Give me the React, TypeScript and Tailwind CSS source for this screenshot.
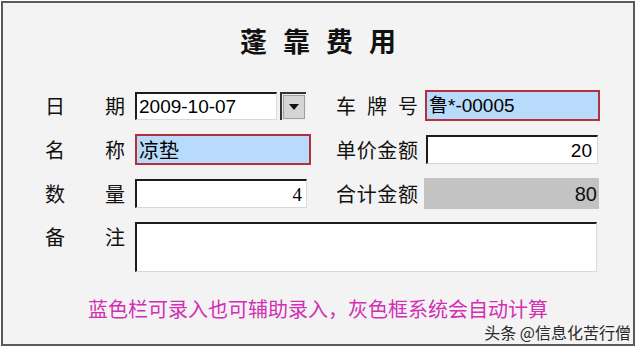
import React from 'react';

const cjk = "font-['Noto_Sans_CJK_SC','Noto_Sans',sans-serif]";

function Label({ chars }: { chars: string[] }) {
  return (
    <div className={`flex justify-between text-[20px] leading-none text-[#111] ${cjk}`}>
      {chars.map((c, i) => (
        <span key={i}>{c}</span>
      ))}
    </div>
  );
}

/* 下沉白框：左上深色，右下浅色 */
function Sunken({ className = '', children }: { className?: string; children?: React.ReactNode }) {
  return (
    <div
      className={`bg-white border-t-2 border-l-2 border-r border-b border-t-[#1c1c1c] border-l-[#1c1c1c] border-r-[#d8d8d8] border-b-[#d8d8d8] ${className}`}
    >
      {children}
    </div>
  );
}

function BlueBox({ className = '', children }: { className?: string; children?: React.ReactNode }) {
  return (
    <div className={`bg-[#b9dbfb] border-2 border-[#b3303c] flex items-center pl-[2px] ${className}`}>
      {children}
    </div>
  );
}

export default function App() {
  return (
    <div className="w-[640px] h-[348px] bg-white relative overflow-hidden">
      <div className="absolute left-[1px] top-[1px] w-[634px] h-[345px] border-2 border-[#5a5a5a] bg-[#f3f3f3]">
        {/* 标题 */}
        <div className={`pt-[22px] h-[56px] text-center text-[27px] font-bold leading-[32px] tracking-[16px] pl-[16px] text-[#111] ${cjk}`}>
          蓬靠费用
        </div>

        <div className="mt-[31px] pl-[42px] grid grid-cols-[80px_183px_110px_182px] gap-y-[13px]">
          {/* 第一行 */}
          <div className="h-[31px] flex items-center">
            <div className="w-[80px]"><Label chars={['日', '期']} /></div>
          </div>
          <div className="h-[31px] flex items-center pl-[10px] gap-[3px]">
            <Sunken className="w-[142px] h-[28px] shrink-0 flex items-center pl-[2px]">
              <span className="font-['Liberation_Sans',sans-serif] text-[19px] leading-none text-black">2009-10-07</span>
            </Sunken>
            <div className="w-[26px] h-[28px] shrink-0 border-t-2 border-l-2 border-t-[#333] border-l-[#333] bg-[#ececec] p-[1px] flex">
              <div className="flex-1 bg-[#d4d4d4] border border-[#a0a0a0] flex items-center justify-center">
                <svg width="10" height="6" viewBox="0 0 10 6">
                  <path d="M0 0 L10 0 L5 6 Z" fill="#111" />
                </svg>
              </div>
            </div>
          </div>
          <div className="h-[31px] flex items-center pl-[28px]">
            <div className="w-[82px]"><Label chars={['车', '牌', '号']} /></div>
          </div>
          <div className="h-[31px] flex items-center pl-[7px]">
            <BlueBox className="w-[175px] h-[31px] shrink-0">
              <span className="text-[19px] leading-none text-black font-['Liberation_Sans','Noto_Sans_CJK_SC',sans-serif]">鲁*-00005</span>
            </BlueBox>
          </div>

          {/* 第二行 */}
          <div className="h-[31px] flex items-center">
            <div className="w-[80px]"><Label chars={['名', '称']} /></div>
          </div>
          <div className="h-[31px] flex items-center pl-[10px]">
            <BlueBox className="w-[176px] h-[31px] shrink-0">
              <span className={`text-[20px] leading-none text-black ${cjk}`}>凉垫</span>
            </BlueBox>
          </div>
          <div className="h-[31px] flex items-center pl-[28px]">
            <div className="w-[82px]"><Label chars={['单', '价', '金', '额']} /></div>
          </div>
          <div className="h-[31px] flex items-center pl-[8px]">
            <Sunken className="w-[172px] h-[29px] shrink-0 flex items-center justify-end pr-[5px]">
              <span className="font-['Liberation_Sans',sans-serif] text-[19px] leading-none text-black">20</span>
            </Sunken>
          </div>

          {/* 第三行 */}
          <div className="h-[31px] flex items-center">
            <div className="w-[80px]"><Label chars={['数', '量']} /></div>
          </div>
          <div className="h-[31px] flex items-center pl-[10px]">
            <Sunken className="w-[172px] h-[29px] shrink-0 flex items-center justify-end pr-[4px]">
              <span className="font-['Liberation_Serif',serif] text-[19px] leading-none text-black">4</span>
            </Sunken>
          </div>
          <div className="h-[31px] flex items-center pl-[28px]">
            <div className="w-[82px]"><Label chars={['合', '计', '金', '额']} /></div>
          </div>
          <div className="h-[31px] flex items-center pl-[6px]">
            <div className="w-[175px] h-[31px] shrink-0 bg-[#c3c3c3] flex items-start justify-end pr-[2px] pt-[6px]">
              <span className="font-['Liberation_Sans',sans-serif] text-[20px] leading-none text-[#111]">80</span>
            </div>
          </div>

          {/* 第四行 */}
          <div className="h-[50px] flex items-start pt-[5px]">
            <div className="w-[80px]"><Label chars={['备', '注']} /></div>
          </div>
          <div className="col-span-3 h-[50px] pl-[10px]">
            <Sunken className="w-[462px] h-[50px]" />
          </div>
        </div>

        {/* 提示 */}
        <div className={`mt-[25px] text-center text-[20px] leading-[24px] text-[#d22fb4] ${cjk}`}>
          蓝色栏可录入也可辅助录入，灰色框系统会自动计算
        </div>

        {/* 水印 */}
        <div className={`absolute right-[2px] bottom-[4px] text-[16px] leading-none text-[#2a2a2a] ${cjk}`}>
          头条 @信息化苦行僧
        </div>
      </div>
    </div>
  );
}
